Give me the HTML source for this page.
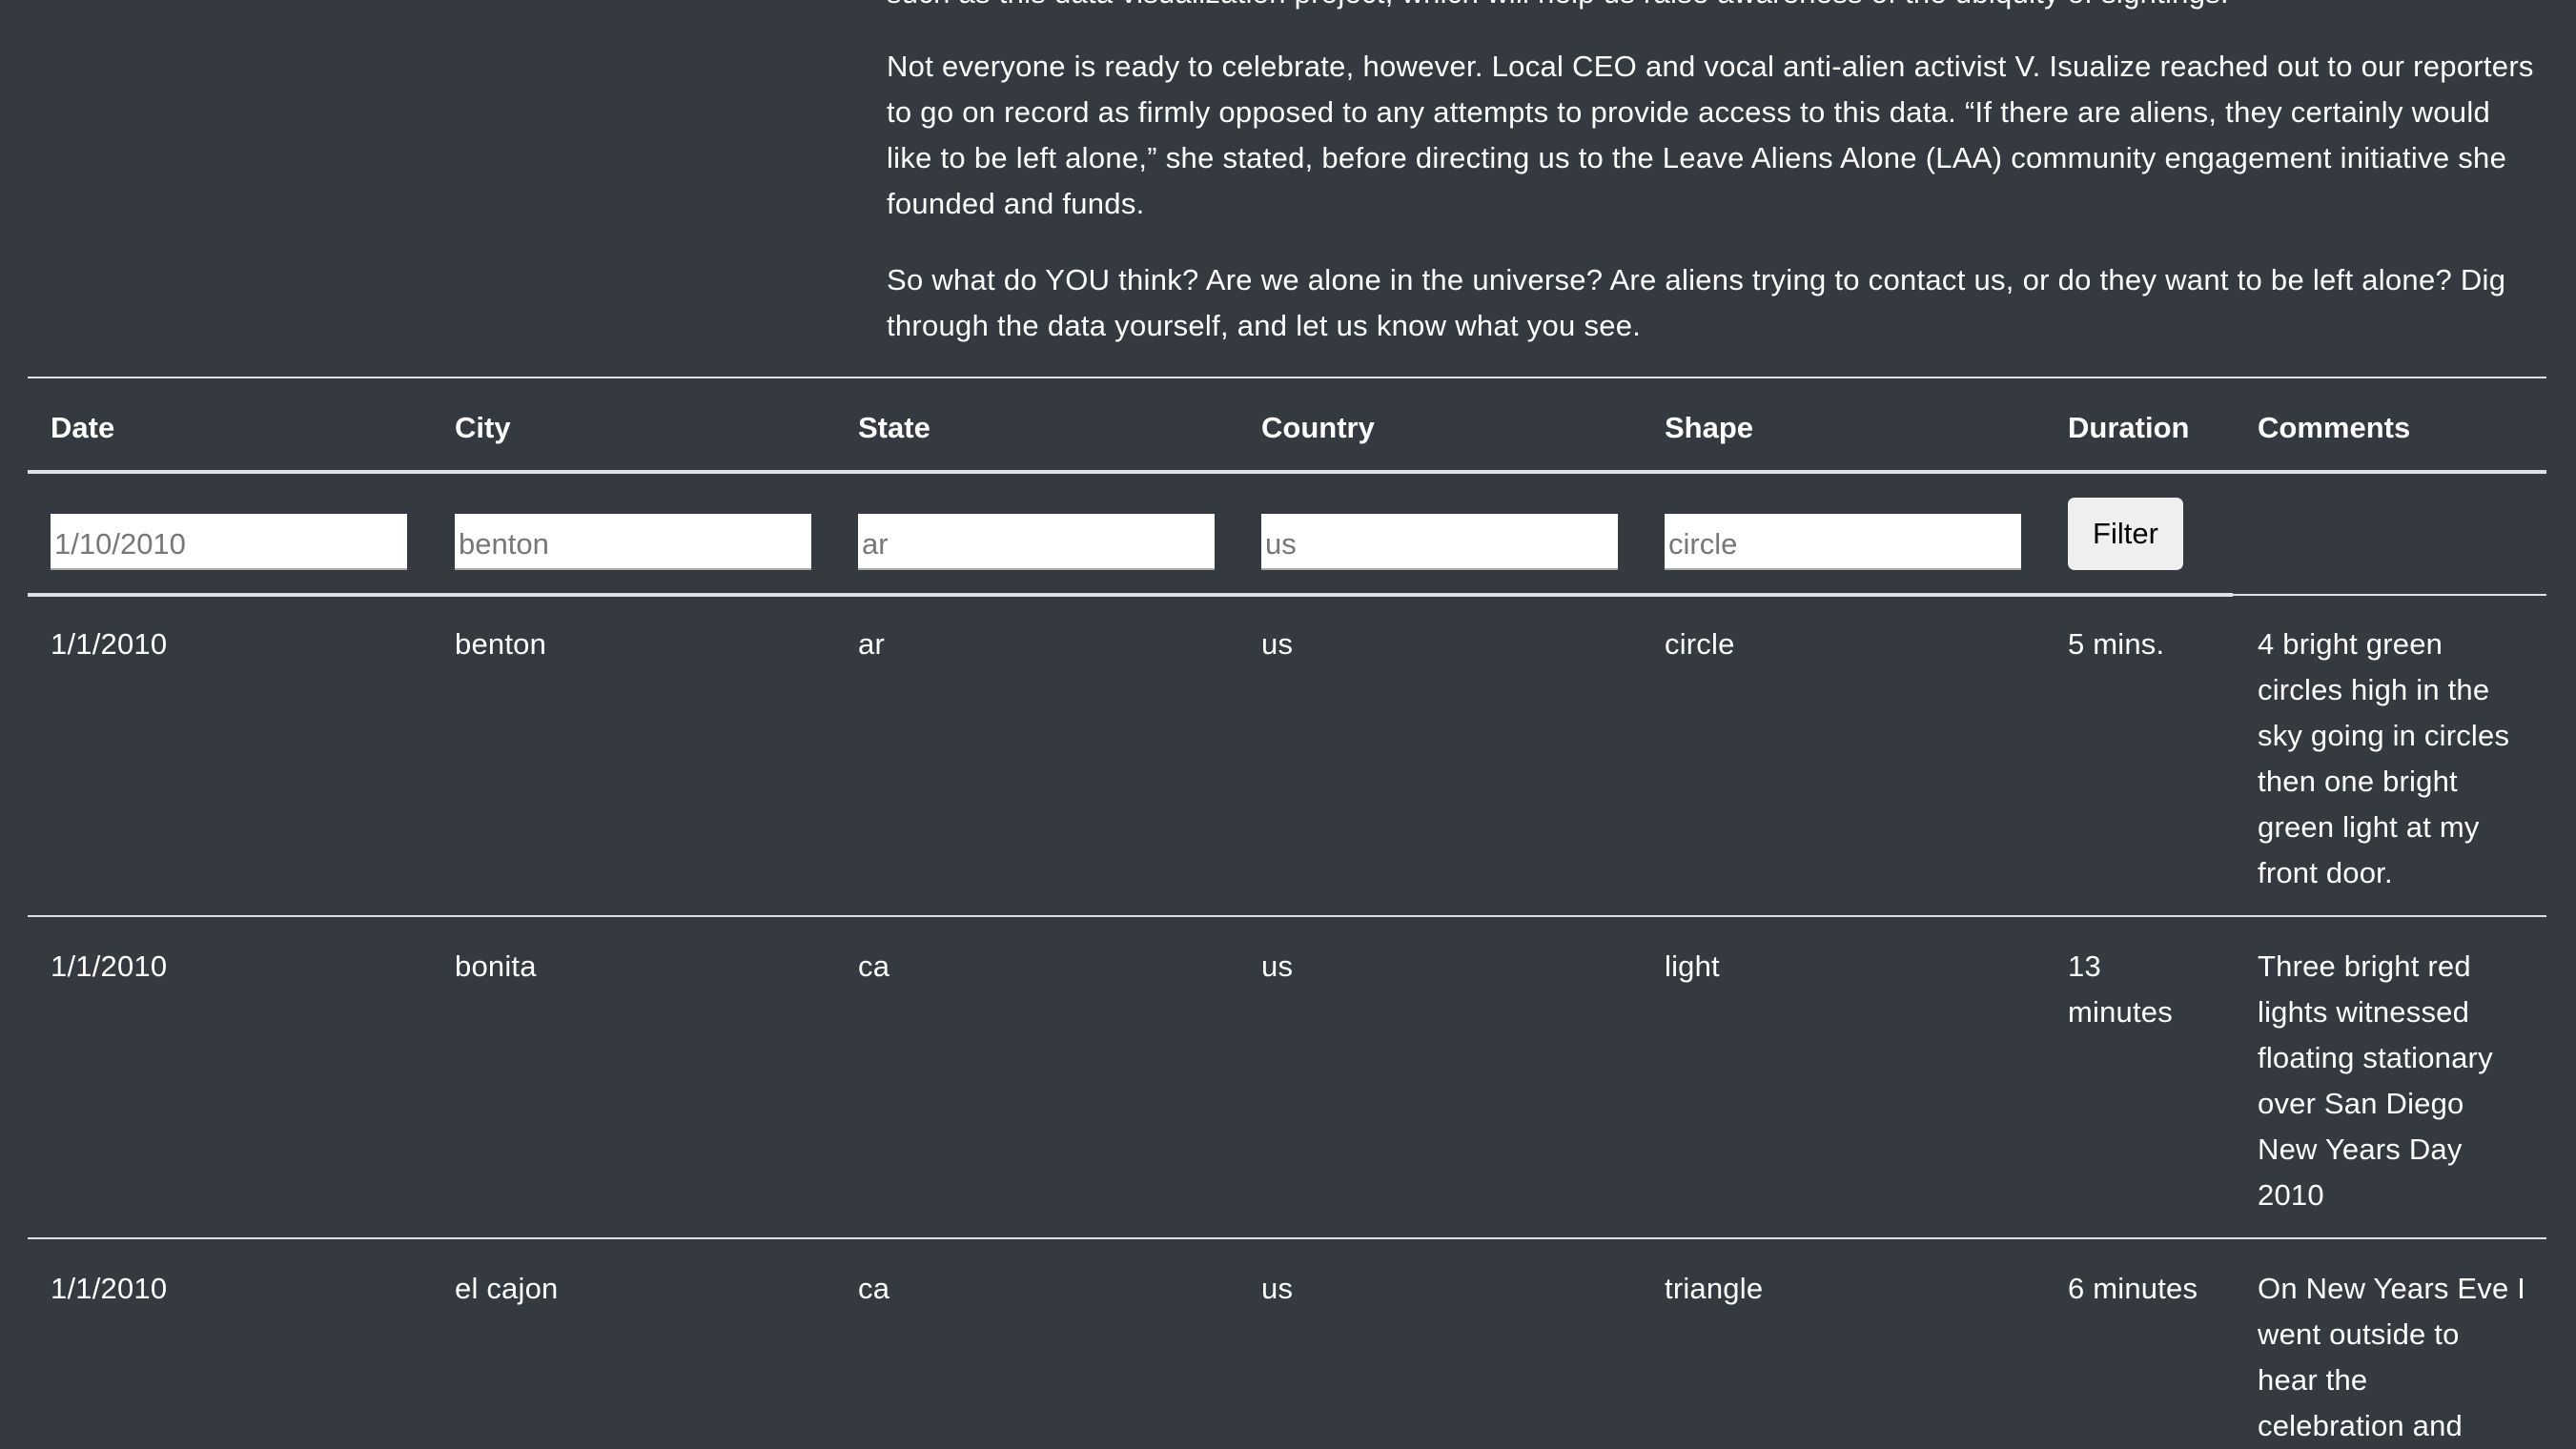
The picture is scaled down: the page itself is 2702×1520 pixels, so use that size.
<!DOCTYPE html>
<html><head><meta charset="utf-8"><style>
html,body{margin:0;padding:0;}
body{width:2702px;height:1504px;background:#343a40;color:#fff;font-family:"Liberation Sans",sans-serif;position:relative;overflow:hidden;}
.l{position:absolute;left:930px;white-space:nowrap;font-size:31px;line-height:48px;letter-spacing:0.28px;}
.hr{position:absolute;left:29px;width:2642px;background:#dee2e6;}
.h{position:absolute;top:425px;font-weight:bold;font-size:31px;line-height:48px;}
.in{position:absolute;top:539px;width:374px;height:59px;background:#fff;border-bottom:2px solid #aaa;box-sizing:border-box;color:#777;font-size:31px;line-height:64px;padding-left:4px;}
.c{position:absolute;font-size:31px;line-height:48px;letter-spacing:0.2px;}
</style></head><body>
<div class="l" style="top:-31px">such as this data visualization project, which will help us raise awareness of the ubiquity of sightings.</div>
<div class="l" style="top:46px">Not everyone is ready to celebrate, however. Local CEO and vocal anti-alien activist V. Isualize reached out to our reporters</div>
<div class="l" style="top:94px">to go on record as firmly opposed to any attempts to provide access to this data. “If there are aliens, they certainly would</div>
<div class="l" style="top:142px">like to be left alone,” she stated, before directing us to the Leave Aliens Alone (LAA) community engagement initiative she</div>
<div class="l" style="top:190px">founded and funds.</div>
<div class="l" style="top:270px">So what do YOU think? Are we alone in the universe? Are aliens trying to contact us, or do they want to be left alone? Dig</div>
<div class="l" style="top:318px">through the data yourself, and let us know what you see.</div>

<div class="hr" style="top:395px;height:2px"></div>
<div class="h" style="left:53px">Date</div>
<div class="h" style="left:477px">City</div>
<div class="h" style="left:900px">State</div>
<div class="h" style="left:1323px">Country</div>
<div class="h" style="left:1746px">Shape</div>
<div class="h" style="left:2169px">Duration</div>
<div class="h" style="left:2368px">Comments</div>
<div class="hr" style="top:493px;height:4px"></div>

<div class="in" style="left:53px">1/10/2010</div>
<div class="in" style="left:477px">benton</div>
<div class="in" style="left:900px">ar</div>
<div class="in" style="left:1323px">us</div>
<div class="in" style="left:1746px">circle</div>
<div style="position:absolute;left:2169px;top:522px;width:121px;height:76px;background:#efefef;border-radius:7px;color:#000;font-size:31px;line-height:76px;text-align:center;">Filter</div>
<div class="hr" style="top:622px;height:4px;width:2313px"></div>
<div class="hr" style="top:623px;height:2px"></div>

<div class="c" style="left:53px;top:652px">1/1/2010</div>
<div class="c" style="left:477px;top:652px">benton</div>
<div class="c" style="left:900px;top:652px">ar</div>
<div class="c" style="left:1323px;top:652px">us</div>
<div class="c" style="left:1746px;top:652px">circle</div>
<div class="c" style="left:2169px;top:652px">5 mins.</div>
<div class="c" style="left:2368px;top:652px">4 bright green<br>circles high in the<br>sky going in circles<br>then one bright<br>green light at my<br>front door.</div>
<div class="hr" style="top:960px;height:2px"></div>

<div class="c" style="left:53px;top:990px">1/1/2010</div>
<div class="c" style="left:477px;top:990px">bonita</div>
<div class="c" style="left:900px;top:990px">ca</div>
<div class="c" style="left:1323px;top:990px">us</div>
<div class="c" style="left:1746px;top:990px">light</div>
<div class="c" style="left:2169px;top:990px">13<br>minutes</div>
<div class="c" style="left:2368px;top:990px">Three bright red<br>lights witnessed<br>floating stationary<br>over San Diego<br>New Years Day<br>2010</div>
<div class="hr" style="top:1298px;height:2px"></div>

<div class="c" style="left:53px;top:1328px">1/1/2010</div>
<div class="c" style="left:477px;top:1328px">el cajon</div>
<div class="c" style="left:900px;top:1328px">ca</div>
<div class="c" style="left:1323px;top:1328px">us</div>
<div class="c" style="left:1746px;top:1328px">triangle</div>
<div class="c" style="left:2169px;top:1328px">6 minutes</div>
<div class="c" style="left:2368px;top:1328px">On New Years Eve I<br>went outside to<br>hear the<br>celebration and</div>
</body></html>
